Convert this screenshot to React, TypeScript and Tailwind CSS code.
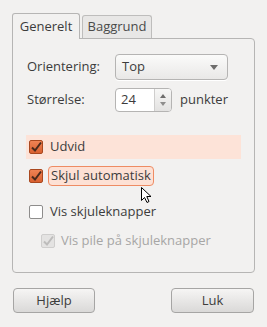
import React from 'react';

function CheckBox({ checked, disabled }: { checked?: boolean; disabled?: boolean }) {
  if (disabled) {
    return (
      <span className="flex h-[14px] w-[14px] shrink-0 items-center justify-center rounded-[2px] border border-[#cfcecd] bg-[#e4e3e2]">
        <svg width="12" height="12" viewBox="0 0 12 12">
          <path d="M2 6.5 L5 9.5 L11 1.5" fill="none" stroke="#bdbcbb" strokeWidth="2" />
        </svg>
      </span>
    );
  }
  if (checked) {
    return (
      <span className="flex h-[14px] w-[14px] shrink-0 items-center justify-center rounded-[2px] border border-[#a9481f] bg-gradient-to-b from-[#f08354] to-[#d9602f]">
        <svg width="12" height="12" viewBox="0 0 12 12">
          <path d="M2 6.5 L5 9.5 L11 1.5" fill="none" stroke="#4a2a1c" strokeWidth="2" />
        </svg>
      </span>
    );
  }
  return (
    <span className="h-[14px] w-[14px] shrink-0 rounded-[2px] border border-[#8e8d8c] bg-white" />
  );
}

export default function App() {
  return (
    <div
      className="relative h-[327px] w-[267px] bg-[#f2f1f0] px-[12px] pt-[13px] text-[13px] text-[#3c3c3c]"
      style={{ fontFamily: '"Open Sans", "DejaVu Sans", sans-serif' }}
    >
      {/* Tabs */}
      <div className="relative z-10 flex h-[25px] items-end">
        <div className="-mb-px flex h-[26px] w-[68px] items-center justify-center rounded-t-[3px] border border-b-0 border-[#b6b5b4] bg-[#f2f1f0]">
          Generelt
        </div>
        <div className="ml-[2px] flex h-[23px] w-[70px] items-center justify-center rounded-t-[3px] border border-b-0 border-[#bebdbc] bg-[#e8e7e6] text-[#4a4a4a]">
          Baggrund
        </div>
      </div>

      {/* Frame */}
      <div className="h-[235px] w-[243px] rounded-b-[4px] rounded-tr-[4px] border border-[#b6b5b4] bg-[#f2f1f0]">
        <div className="mt-[15px] flex items-center pl-[14px]">
          <div className="w-[88px]">Orientering:</div>
          <div className="flex h-[26px] w-[113px] items-center justify-between rounded-[4px] border border-[#b5b4b3] bg-gradient-to-b from-[#fbfbfa] to-[#e9e8e7] pl-[6px] pr-[9px] shadow-[0_1px_0_#fff]">
            <span>Top</span>
            <svg width="8" height="5" viewBox="0 0 8 5">
              <path d="M0 0 H8 L4 5 Z" fill="#6e6d6c" />
            </svg>
          </div>
        </div>

        <div className="mt-[8px] flex items-center pl-[14px]">
          <div className="w-[88px]">Størrelse:</div>
          <div className="flex h-[24px] w-[57px] overflow-hidden rounded-[4px] border border-[#b5b4b3] bg-white">
            <div className="flex flex-1 items-center pl-[5px]">24</div>
            <div className="flex w-[17px] flex-col items-center justify-center gap-[4px] border-l border-[#cfcecd] bg-gradient-to-b from-[#f7f7f6] to-[#e3e2e1]">
              <svg width="6" height="4" viewBox="0 0 6 4">
                <path d="M0 4 H6 L3 0 Z" fill="#6e6d6c" />
              </svg>
              <svg width="6" height="4" viewBox="0 0 6 4">
                <path d="M0 0 H6 L3 4 Z" fill="#8e8d8c" />
              </svg>
            </div>
          </div>
          <span className="ml-[8px]">punkter</span>
        </div>

        {/* Checkboxes */}
        <div className="ml-[13px] mt-[23px] flex h-[24px] w-[215px] items-center bg-[#fde3d8] pl-[3px]">
          <CheckBox checked />
          <span className="ml-[7px]">Udvid</span>
        </div>

        <div className="ml-[16px] mt-[5px] flex h-[24px] items-center">
          <CheckBox checked />
          <span className="ml-[5px] flex h-[20px] items-center rounded-[4px] border border-[#ee8c64] bg-[#fde1d5] px-[2px]">
            Skjul automatisk
          </span>
        </div>

        <div className="ml-[16px] mt-[12px] flex h-[24px] items-center">
          <CheckBox />
          <span className="ml-[7px]">Vis skjuleknapper</span>
        </div>

        <div className="ml-[28px] mt-[5px] flex h-[24px] items-center text-[#a7a6a5]">
          <CheckBox disabled />
          <span className="ml-[6px]">Vis pile på skjuleknapper</span>
        </div>
      </div>

      {/* Buttons */}
      <div className="mt-[15px] flex justify-between pl-px pr-px">
        <button className="h-[25px] w-[82px] rounded-[4px] border border-[#a6a5a4] bg-gradient-to-b from-[#f6f5f4] to-[#dad9d8] text-[#3c3c3c]">
          Hjælp
        </button>
        <button className="h-[25px] w-[83px] rounded-[4px] border border-[#a6a5a4] bg-gradient-to-b from-[#f6f5f4] to-[#dad9d8] text-[#3c3c3c]">
          Luk
        </button>
      </div>

      {/* Mouse cursor */}
      <svg className="absolute left-[140px] top-[186px]" width="13" height="18" viewBox="0 0 13 18">
        <path
          d="M1.5 1.5 L1.5 14.5 L4.5 11.5 L7 16.5 L9 15.5 L6.8 10.5 L11 10.5 Z"
          fill="#fff"
          stroke="#000"
          strokeWidth="1"
          strokeLinejoin="miter"
        />
      </svg>
    </div>
  );
}
